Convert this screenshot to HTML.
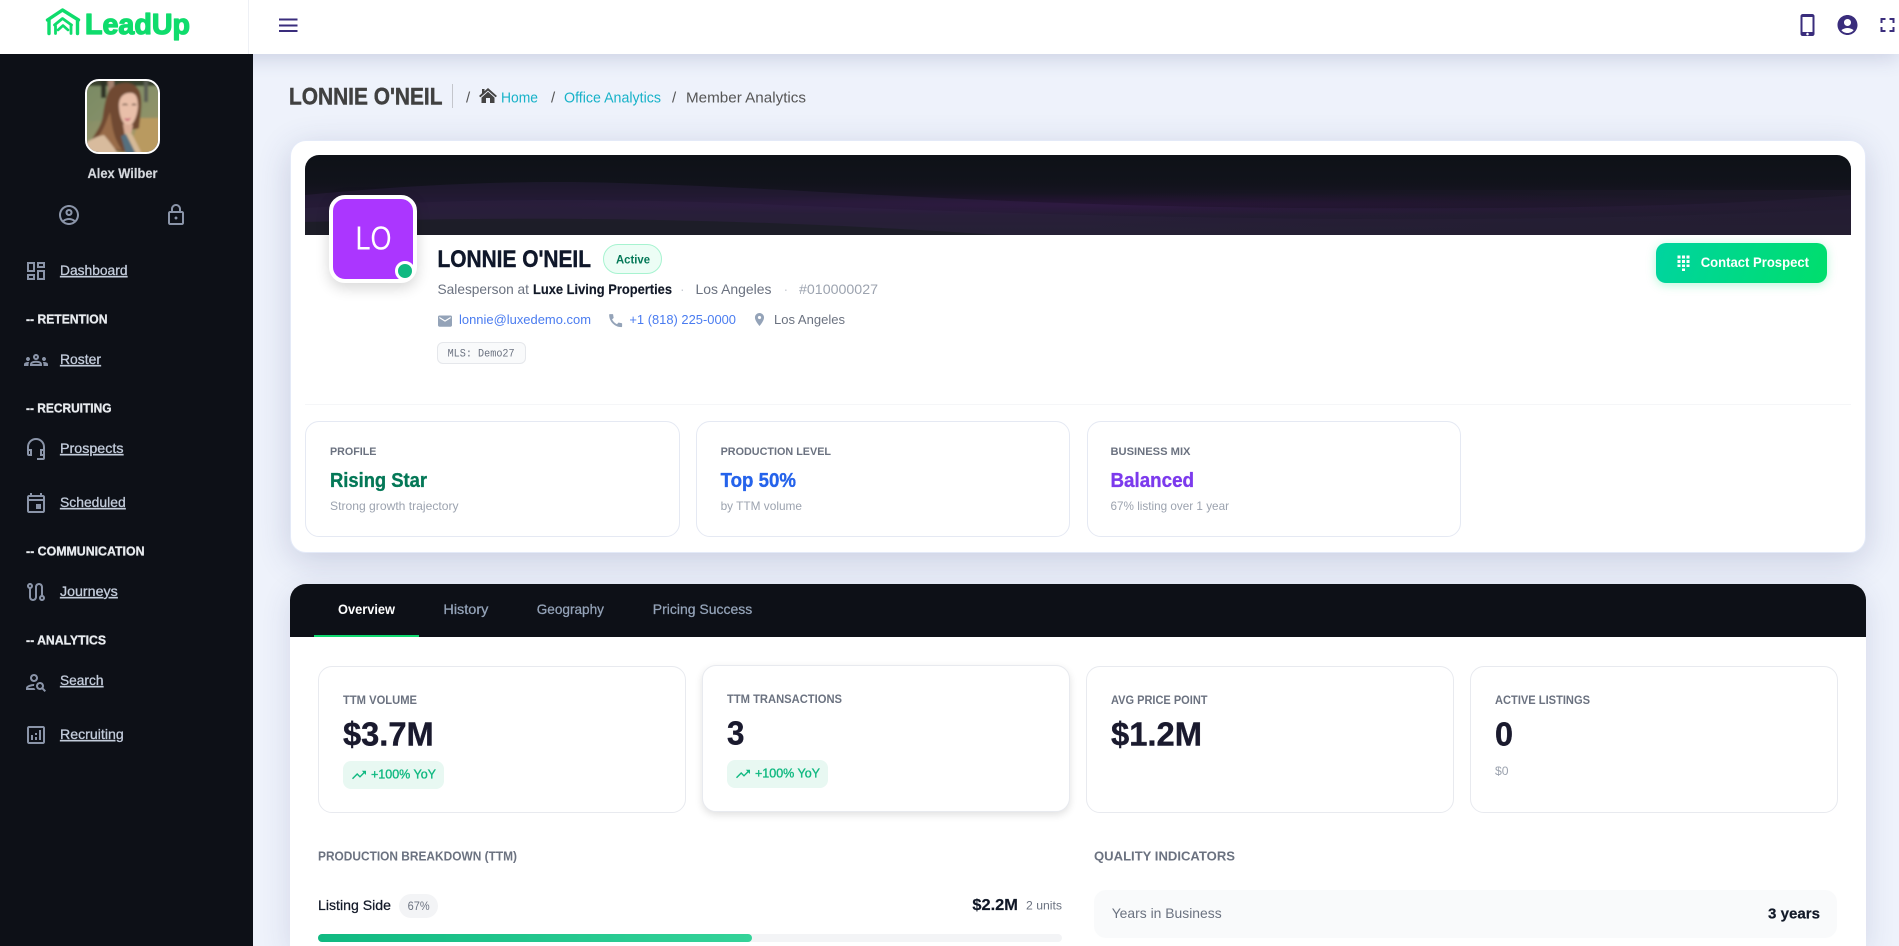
<!DOCTYPE html>
<html lang="en"><head><meta charset="utf-8"><title>Member Analytics</title>
<style>
html,body{margin:0;padding:0;width:1899px;height:946px;overflow:hidden;background:#eef2fb;font-family:"Liberation Sans",Arial,sans-serif}
.b{position:absolute;box-sizing:border-box}
svg.o{position:absolute;left:0;top:0;pointer-events:none}
text{font-family:"Liberation Sans",Arial,sans-serif}
.mc{background:#fff;border:1px solid #e5e9f3;border-radius:14px}
.kc{background:#fff;border:1px solid #e8eaef;border-radius:14px}
.tb{background:#e8f8f2;border-radius:8px}
#clip{position:absolute;left:0;top:0;width:1899px;height:946px;overflow:hidden}
</style></head><body><div id="clip">
<!-- header -->
<div class="b" style="left:0;top:0;width:1899px;height:54px;background:#fff;box-shadow:0 4px 20px rgba(60,70,130,.2);z-index:2"></div>
<div class="b" style="left:248px;top:0;width:1px;height:54px;background:#eef0f5;z-index:3"></div>
<!-- sidebar -->
<div class="b" style="left:0;top:54px;width:253px;height:892px;background:#0d1017;z-index:3"></div>
<!-- profile card -->
<div class="b" style="left:289.500px;top:140px;width:1576.500px;height:413px;background:#fff;border:1px solid #e4eaf8;border-radius:16px;box-shadow:0 8px 34px rgba(50,60,120,.2)"></div>
<svg class="o" width="1899" height="946" style="z-index:1">
<defs>
<clipPath id="bc"><path d="M319 155H1837a14 14 0 0 1 14 14V235H305V169a14 14 0 0 1 14-14z"/></clipPath>
<linearGradient id="bg1" x1="0" y1="0" x2="0" y2="1"><stop offset="0" stop-color="#0e1117"/><stop offset=".35" stop-color="#11131b"/><stop offset=".62" stop-color="#1b1528"/><stop offset="1" stop-color="#181a20"/></linearGradient>
<radialGradient id="bg2" cx=".58" cy=".62" r=".42" gradientTransform="matrix(1 0 0 .35 0 .4)"><stop offset="0" stop-color="#3c1450" stop-opacity=".38"/><stop offset="1" stop-color="#3c1450" stop-opacity="0"/></radialGradient>
<linearGradient id="bg3" x1="0" y1="0" x2="1" y2="0"><stop offset="0" stop-color="#171a20" stop-opacity="0"/><stop offset=".5" stop-color="#1c1a28" stop-opacity="0"/><stop offset="1" stop-color="#221c2e" stop-opacity=".6"/></linearGradient>
</defs>
<g clip-path="url(#bc)">
<rect x="305" y="155" width="1546" height="80" fill="url(#bg1)"/>
<rect x="305" y="155" width="1546" height="80" fill="url(#bg2)"/>
<path d="M305 195C420 184 520 180 620 183C800 188 1000 206 1300 208C1500 209 1700 208 1851 195V235H305z" fill="#6a3a98" fill-opacity=".13"/>
<path d="M305 208C460 198 600 198 760 204C960 212 1200 220 1450 219C1620 218 1750 214 1851 209V235H305z" fill="#4a3a68" fill-opacity=".1"/>
<path d="M305 222C600 214 800 222 1000 235H305z" fill="#161c1e" fill-opacity=".55"/>
<rect x="305" y="190" width="1546" height="45" fill="url(#bg3)"/>
</g>
</svg>
<!-- LO avatar -->
<div class="b" style="left:329px;top:195px;width:88px;height:88px;background:#ab36ff;border:4px solid #fff;border-radius:16px;box-shadow:0 5px 14px rgba(0,0,0,.16);z-index:1"></div>
<div class="b" style="left:395px;top:261px;width:20px;height:20px;background:#10b981;border:3px solid #fff;border-radius:50%;z-index:1"></div>
<!-- badges -->
<div class="b" style="left:603px;top:244px;width:59px;height:30px;background:#ecfdf5;border:1px solid #a7f3d0;border-radius:15px;z-index:1"></div>
<div class="b" style="left:437px;top:342px;width:89px;height:22px;background:#f9fafb;border:1px solid #e5e7eb;border-radius:6px;z-index:1"></div>
<div class="b" style="left:1656px;top:243px;width:171px;height:40px;background:linear-gradient(110deg,#00d4a0,#00de6c);border-radius:10px;box-shadow:0 2px 10px rgba(0,222,120,.28);z-index:1"></div>
<div class="b" style="left:305px;top:404px;width:1546px;height:1px;background:#f5f6f8;z-index:1"></div>
<div class="b mc" style="left:305px;top:421px;width:375px;height:116px;z-index:1"></div>
<div class="b mc" style="left:696px;top:421px;width:374px;height:116px;z-index:1"></div>
<div class="b mc" style="left:1087px;top:421px;width:374px;height:116px;z-index:1"></div>
<!-- tabs card -->
<div class="b" style="left:290px;top:584px;width:1576px;height:362px;background:#fff;border-radius:16px 16px 0 0;box-shadow:0 8px 30px rgba(50,60,120,.14);z-index:1"></div>
<div class="b" style="left:290px;top:584px;width:1576px;height:53px;background:#0d1017;border-radius:16px 16px 0 0;z-index:1"></div>
<div class="b" style="left:314px;top:635px;width:105px;height:2px;background:#0fd86f;z-index:1"></div>
<!-- kpi -->
<div class="b kc" style="left:318px;top:666px;width:368px;height:147px;z-index:1"></div>
<div class="b kc" style="left:702px;top:665px;width:368px;height:147px;box-shadow:0 3px 8px rgba(0,0,0,.12);z-index:1"></div>
<div class="b kc" style="left:1086px;top:666px;width:368px;height:147px;z-index:1"></div>
<div class="b kc" style="left:1470px;top:666px;width:368px;height:147px;z-index:1"></div>
<div class="b tb" style="left:343px;top:761px;width:101px;height:28px;z-index:1"></div>
<div class="b tb" style="left:727px;top:760px;width:101px;height:28px;z-index:1"></div>
<!-- breakdown -->
<div class="b" style="left:399px;top:894px;width:39px;height:24px;background:#f3f4f6;border-radius:12px;z-index:1"></div>
<div class="b" style="left:318px;top:934px;width:744px;height:8px;background:#f3f4f6;border-radius:4px;z-index:1"></div>
<div class="b" style="left:318px;top:934px;width:434px;height:8px;background:linear-gradient(90deg,#10b981,#34d399);border-radius:4px;z-index:1"></div>
<div class="b" style="left:1094px;top:890px;width:743px;height:48px;background:#f9fafb;border-radius:12px;z-index:1"></div>

<!-- overlay: text + icons -->
<svg class="o" width="1899" height="946" viewBox="0 0 1899 946" style="z-index:5">
<defs>
<clipPath id="ph"><rect x="87" y="81" width="71" height="71" rx="12"/></clipPath>
<linearGradient id="pb" x1="0" y1="0" x2="1" y2="1"><stop offset="0" stop-color="#75855f"/><stop offset=".5" stop-color="#93946a"/><stop offset="1" stop-color="#bd9c5e"/></linearGradient>
<filter id="bl" x="-10%" y="-10%" width="120%" height="120%"><feGaussianBlur stdDeviation="1.100"/></filter>
</defs>

<!-- logo -->
<g fill="none" stroke="#0fdc6c" stroke-linejoin="round" stroke-linecap="round">
<path d="M47.500 20L62.500 10L78.500 20" stroke-width="3.400"/>
<path d="M49 20V33.500M77.500 20V33.500" stroke-width="3.400"/>
<path d="M54.500 25L62.500 18.500L71.500 25" stroke-width="2.800"/>
<path d="M55.500 26V33.500M71 26V33.500" stroke-width="2.800"/>
<path d="M58 30L63 25.500L68 30" stroke-width="2.600"/>
</g>
<text x="85" y="33.800" font-size="29" font-weight="700" fill="#0fdc6c" stroke="#0fdc6c" stroke-width="1.300" stroke-linejoin="round" textLength="105" lengthAdjust="spacingAndGlyphs">LeadUp</text>

<!-- hamburger -->
<path d="M279 19.500h18.500M279 25.500h18.500M279 31h18.500" stroke="#3a2d7c" stroke-width="2" fill="none"/>
<!-- header icons -->
<g fill="#3a2d7c">
<path transform="translate(1795.500 13)" fill-rule="evenodd" d="M7.500 1h9c1.500 0 2.500 .9 2.500 2v18c0 1.100-.9 2-2 2H7c-1.100 0-2-.9-2-2V3c0-1.100 1-2 2.500-2zM7 4v15h10V4zM12 19.800a1.300 1.300 0 1 0 .01 0z"/>
<path transform="translate(1835.500 13)" d="M12 2C6.480 2 2 6.480 2 12s4.480 10 10 10 10-4.480 10-10S17.520 2 12 2zm0 4c1.930 0 3.500 1.570 3.500 3.500S13.930 13 12 13s-3.500-1.570-3.500-3.500S10.070 6 12 6zm0 14c-2.030 0-4.430-.82-6.140-2.880C7.550 15.800 9.680 15 12 15s4.450.8 6.140 2.120C16.430 19.180 14.030 20 12 20z"/>
<path transform="translate(1875.500 13)" d="M7 14H5v5h5v-2H7v-3zm-2-4h2V7h3V5H5v5zm12 7h-3v2h5v-5h-2v3zM14 5v2h3v3h2V5h-5z"/>
</g>

<!-- photo -->
<g clip-path="url(#ph)"><g filter="url(#bl)">
<rect x="85" y="79" width="75" height="75" fill="url(#pb)"/>
<rect x="85" y="79" width="75" height="42" fill="#7c8d68" fill-opacity=".5"/>
<rect x="85" y="79" width="75" height="7" fill="#39402f"/>
<path d="M140 118H160V154H128z" fill="#b99a60"/>
<rect x="101" y="80" width="5" height="18" fill="#2f3026"/>
<rect x="108" y="80" width="6" height="12" fill="#a58270"/>
<rect x="144" y="80" width="4" height="22" fill="#5c5f55"/>
<path d="M107 96C110 86 118 83 126 83C134 83 140 88 141 97C142 108 140 118 139 128C136 130 133 128 130 131C128 140 134 148 126 152C116 152 100 146 91 141C96 132 102 125 103 115C104 108 105 102 107 96z" fill="#6f4a32"/>
<path d="M97 138C104 130 106 122 110 112C112 122 112 136 122 150C112 150 104 144 97 138z" fill="#996c48"/>
<path d="M119 105C119 96 125 92 132 93C137 94 138 100 138 107C137 117 133 126 128 126C122 125 119 114 119 105z" fill="#e9bfa9"/>
<path d="M124 118q4 1.500 7-.5q-1.500 3.500-3.500 3.500q-2 0-3.500-3z" fill="#c9687a"/>
<path d="M122.500 105q2.500-1.500 5 0M132 105q2-1.200 4 0" stroke="#3e2a20" stroke-width="1.200" fill="none"/>
<path d="M123 124L133 125L131 134L125 136z" fill="#dcae97"/>
<path d="M85 154V143C92 139 98 136 104 135C109 141 114 147 118 154z" fill="#d8bb9d"/>
<path d="M121 136L128 133L138 154H126z" fill="#54707f"/>
<path d="M125 132L132 134L142 154H136z" fill="#d6b997"/>
</g></g>
<rect x="86" y="80" width="73" height="73" rx="13" fill="none" stroke="#fff" stroke-width="2"/>
<text x="87.500" y="177.800" font-size="14" font-weight="700" fill="#d4d7dc" stroke="#d4d7dc" stroke-width=".2" textLength="70" lengthAdjust="spacingAndGlyphs">Alex Wilber</text>

<!-- sidebar icons -->
<g fill="#8a94a8">
<path transform="translate(57 203)" d="M12 2C6.480 2 2 6.480 2 12s4.480 10 10 10 10-4.480 10-10S17.520 2 12 2zM7.350 18.500C8.660 17.560 10.260 17 12 17s3.340.56 4.650 1.500c-1.310.94-2.910 1.500-4.650 1.500s-3.340-.56-4.650-1.500zm10.790-1.380C16.450 15.800 14.320 15 12 15s-4.450.8-6.140 2.120C4.700 15.730 4 13.950 4 12c0-4.420 3.580-8 8-8s8 3.580 8 8c0 1.950-.7 3.730-1.860 5.120zM12 6c-1.930 0-3.500 1.570-3.500 3.500S10.070 13 12 13s3.500-1.570 3.500-3.500S13.930 6 12 6zm0 5c-.83 0-1.500-.67-1.500-1.500S11.170 8 12 8s1.500.67 1.500 1.500S12.830 11 12 11z"/>
<path transform="translate(164 203)" d="M18 8h-1V6c0-2.760-2.240-5-5-5S7 3.240 7 6v2H6c-1.100 0-2 .9-2 2v10c0 1.100.9 2 2 2h12c1.100 0 2-.9 2-2V10c0-1.100-.9-2-2-2zM9 6c0-1.660 1.340-3 3-3s3 1.340 3 3v2H9V6zm9 14H6V10h12v10zm-6-3.500c.83 0 1.500-.67 1.500-1.500s-.67-1.500-1.500-1.500-1.500.67-1.500 1.500.67 1.500 1.500 1.500z"/>
<path transform="translate(24 259)" d="M19 5v2h-4V5h4M9 5v6H5V5h4m10 8v6h-4v-6h4M9 17v2H5v-2h4M21 3h-8v6h8V3zM11 3H3v10h8V3zm10 8h-8v10h8V11zm-10 4H3v6h8v-6z"/>
<path transform="translate(24 348)" d="M4 13c1.100 0 2-.9 2-2s-.9-2-2-2-2 .9-2 2 .9 2 2 2zm1.130 1.100c-.37-.06-.74-.1-1.130-.1-.99 0-1.930.21-2.780.58C.48 14.900 0 15.620 0 16.430V18h4.500v-1.610c0-.83.23-1.610.63-2.290zM20 13c1.100 0 2-.9 2-2s-.9-2-2-2-2 .9-2 2 .9 2 2 2zm4 3.430c0-.81-.48-1.530-1.220-1.850-.85-.37-1.790-.58-2.780-.58-.39 0-.76.04-1.130.1.4.68.63 1.460.63 2.290V18H24v-1.570zm-7.760-2.780c-1.170-.52-2.610-.9-4.240-.9-1.630 0-3.070.39-4.240.9C6.680 14.130 6 15.210 6 16.390V18h12v-1.610c0-1.180-.68-2.260-1.760-2.740zM8.070 16c.09-.23.13-.39.91-.69.97-.38 1.990-.56 3.020-.56s2.050.18 3.020.56c.77.3.81.46.91.69H8.070zM12 8c.55 0 1 .45 1 1s-.45 1-1 1-1-.45-1-1 .45-1 1-1m0-2c-1.660 0-3 1.340-3 3s1.340 3 3 3 3-1.340 3-3-1.340-3-3-3z"/>
<path transform="translate(24 491)" d="M19 4h-1V2h-2v2H8V2H6v2H5c-1.100 0-2 .9-2 2v14c0 1.100.9 2 2 2h14c1.100 0 2-.9 2-2V6c0-1.100-.9-2-2-2zm0 16H5V10h14v10zm0-12H5V6h14v2zm-7 5h5v5h-5z"/>
<path transform="translate(24 580)" d="M19 15.180V7c0-2.210-1.790-4-4-4s-4 1.790-4 4v10c0 1.100-.9 2-2 2s-2-.9-2-2V8.820C8.160 8.400 9 7.300 9 6c0-1.660-1.340-3-3-3S3 4.340 3 6c0 1.300.84 2.400 2 2.820V17c0 2.210 1.790 4 4 4s4-1.790 4-4V7c0-1.100.9-2 2-2s2 .9 2 2v8.180c-1.160.41-2 1.510-2 2.820 0 1.660 1.340 3 3 3s3-1.340 3-3c0-1.300-.84-2.400-2-2.820zM6 7c-.55 0-1-.45-1-1s.45-1 1-1 1 .45 1 1-.45 1-1 1zm12 12c-.55 0-1-.45-1-1s.45-1 1-1 1 .45 1 1-.45 1-1 1z"/>
<path transform="translate(24 670)" d="M10 12c2.210 0 4-1.790 4-4s-1.790-4-4-4-4 1.790-4 4 1.790 4 4 4zm0-6c1.100 0 2 .9 2 2s-.9 2-2 2-2-.9-2-2 .9-2 2-2zM4 18c.22-.72 3.310-2 6-2 0-.7.13-1.370.35-1.990C7.620 13.910 2 15.270 2 18v2h9.540c-.52-.58-.93-1.250-1.190-2H4zM19.430 18.020c.36-.59.57-1.280.57-2.020 0-2.210-1.790-4-4-4s-4 1.790-4 4 1.790 4 4 4c.74 0 1.430-.22 2.020-.57L20.590 22 22 20.590c-1.500-1.500-.79-.8-2.570-2.570zM16 18c-1.100 0-2-.9-2-2s.9-2 2-2 2 .9 2 2-.9 2-2 2z"/>
<path transform="translate(24 723)" d="M19 3H5c-1.100 0-2 .9-2 2v14c0 1.100.9 2 2 2h14c1.100 0 2-.9 2-2V5c0-1.100-.9-2-2-2zm0 16H5V5h14v14zM7 12h2v5H7zM15 7h2v10h-2zM11 14h2v3h-2zM11 10h2v2h-2z"/>
</g>
<!-- headset -->
<g transform="translate(24 437)" fill="none" stroke="#8a94a8" stroke-width="2">
<path d="M4 17V10a8 8 0 0 1 16 0v7"/>
<path d="M4 13h3v5H5a1 1 0 0 1-1-1zM20 13h-3v5h2a1 1 0 0 0 1-1z"/>
<path d="M20 17v4a1 1 0 0 1-1 1h-6"/>
</g>

<!-- sidebar text -->
<g font-size="14" fill="#c3ccdb" stroke="#c3ccdb" stroke-width=".3" text-decoration="underline">
<text x="60" y="275" textLength="67.500" lengthAdjust="spacingAndGlyphs">Dashboard</text>
<text x="60" y="364" textLength="41" lengthAdjust="spacingAndGlyphs">Roster</text>
<text x="60" y="453" textLength="63.500" lengthAdjust="spacingAndGlyphs">Prospects</text>
<text x="60" y="507" textLength="65.700" lengthAdjust="spacingAndGlyphs">Scheduled</text>
<text x="60" y="596" textLength="57.700" lengthAdjust="spacingAndGlyphs">Journeys</text>
<text x="60" y="685" textLength="43.500" lengthAdjust="spacingAndGlyphs">Search</text>
<text x="60" y="739" textLength="63.700" lengthAdjust="spacingAndGlyphs">Recruiting</text>
</g>
<g font-size="12.500" font-weight="700" fill="#e8ebef" stroke="#e8ebef" stroke-width=".3">
<text x="26" y="323.500" textLength="81.500" lengthAdjust="spacingAndGlyphs">-- RETENTION</text>
<text x="26" y="412.500" textLength="85.500" lengthAdjust="spacingAndGlyphs">-- RECRUITING</text>
<text x="26" y="555.500" textLength="118.500" lengthAdjust="spacingAndGlyphs">-- COMMUNICATION</text>
<text x="26" y="644.500" textLength="80" lengthAdjust="spacingAndGlyphs">-- ANALYTICS</text>
</g>

<!-- page title -->
<text x="289" y="104.300" font-size="24" font-weight="700" fill="#404040" stroke="#404040" stroke-width=".45" textLength="153.500" lengthAdjust="spacingAndGlyphs">LONNIE O'NEIL</text>
<rect x="452" y="84" width="1" height="24" fill="#c4c6cc"/>
<path transform="translate(479 88)" fill="#444" d="M9 0L18 8L16.600 9.300L9 2.600L1.400 9.300L0 8L3 5.300V1H5.500V3.100zM9 3.800L15.500 9.600V15H11V10H7V15H2.500V9.600z"/>
<g font-size="15">
<text x="466" y="102.300" fill="#555">/</text>
<text x="501" y="102.300" fill="#17b2c8" textLength="37" lengthAdjust="spacingAndGlyphs">Home</text>
<text x="551" y="102.300" fill="#555">/</text>
<text x="564" y="102.300" fill="#17b2c8" textLength="97" lengthAdjust="spacingAndGlyphs">Office Analytics</text>
<text x="672" y="102.300" fill="#555">/</text>
<text x="686" y="102.300" fill="#555" textLength="120" lengthAdjust="spacingAndGlyphs">Member Analytics</text>
</g>

<!-- profile -->
<text x="355.500" y="249.500" font-size="33" fill="#fff" textLength="36" lengthAdjust="spacingAndGlyphs">LO</text>
<text x="437.500" y="267" font-size="24" font-weight="700" fill="#0f172a" stroke="#0f172a" stroke-width=".45" textLength="153.500" lengthAdjust="spacingAndGlyphs">LONNIE O'NEIL</text>
<text x="616" y="263.300" font-size="12" font-weight="700" fill="#047857" textLength="34" lengthAdjust="spacingAndGlyphs">Active</text>
<g font-size="14">
<text x="437.500" y="294" fill="#6b7280" textLength="91.500" lengthAdjust="spacingAndGlyphs">Salesperson at</text>
<text x="533" y="294" font-weight="700" fill="#111827" stroke="#111827" stroke-width=".15" textLength="139" lengthAdjust="spacingAndGlyphs">Luxe Living Properties</text>
<text x="680" y="294" fill="#c8ccd3">·</text>
<text x="695.500" y="294" fill="#6b7280" textLength="76" lengthAdjust="spacingAndGlyphs">Los Angeles</text>
<text x="783.500" y="294" fill="#c8ccd3">·</text>
<text x="799" y="294" fill="#9ca3af" textLength="79" lengthAdjust="spacingAndGlyphs">#010000027</text>
</g>
<path transform="translate(436.600 312.700) scale(.7)" fill="#94a3b8" d="M20 4H4c-1.100 0-2 .9-2 2v12c0 1.100.9 2 2 2h16c1.100 0 2-.9 2-2V6c0-1.100-.9-2-2-2zm0 4l-8 5-8-5V6l8 5 8-5v2z"/>
<path transform="translate(607 312) scale(.72)" fill="#94a3b8" d="M20.010 15.380c-1.230 0-2.420-.2-3.530-.56-.35-.12-.74-.03-1.010.24l-1.570 1.970c-2.830-1.350-5.480-3.900-6.890-6.830l1.950-1.660c.27-.28.35-.67.24-1.020-.37-1.110-.56-2.300-.56-3.530 0-.54-.45-.99-.99-.99H4.190C3.650 3 3 3.240 3 3.990 3 13.280 10.730 21 20.010 21c.71 0 .99-.63.99-1.180v-3.450c0-.54-.45-.99-.99-.99z"/>
<path transform="translate(751.700 311.700) scale(.65)" fill="#94a3b8" d="M12 2C8.130 2 5 5.130 5 9c0 5.250 7 13 7 13s7-7.750 7-13c0-3.870-3.130-7-7-7zm0 9.500c-1.380 0-2.500-1.120-2.500-2.500s1.120-2.500 2.500-2.500 2.500 1.120 2.500 2.500-1.120 2.500-2.500 2.500z"/>
<g font-size="13">
<text x="459" y="324" fill="#4a7cf0" textLength="132" lengthAdjust="spacingAndGlyphs">lonnie@luxedemo.com</text>
<text x="629.400" y="324" fill="#4a7cf0" textLength="106.600" lengthAdjust="spacingAndGlyphs">+1 (818) 225-0000</text>
<text x="774" y="324" fill="#6b7280" textLength="71" lengthAdjust="spacingAndGlyphs">Los Angeles</text>
</g>
<text x="447.600" y="356.500" font-size="11" fill="#6b7280" style="font-family:'Liberation Mono',monospace" textLength="67" lengthAdjust="spacingAndGlyphs">MLS: Demo27</text>

<!-- contact button -->
<g fill="#fff">
<rect x="1677.500" y="255.500" width="3" height="3"/><rect x="1682" y="255.500" width="3" height="3"/><rect x="1686.500" y="255.500" width="3" height="3"/>
<rect x="1677.500" y="260" width="3" height="3"/><rect x="1682" y="260" width="3" height="3"/><rect x="1686.500" y="260" width="3" height="3"/>
<rect x="1677.500" y="264.500" width="3" height="2.500"/><rect x="1682" y="264.500" width="3" height="2.500"/><rect x="1686.500" y="264.500" width="3" height="2.500"/>
<rect x="1682" y="268.500" width="3" height="2.500"/>
</g>
<text x="1700.700" y="267" font-size="14" font-weight="700" fill="#fff" textLength="108.300" lengthAdjust="spacingAndGlyphs">Contact Prospect</text>

<!-- mini cards -->
<g font-size="11" font-weight="700" fill="#6b7280">
<text x="330" y="455" textLength="46.400" lengthAdjust="spacingAndGlyphs">PROFILE</text>
<text x="720.600" y="455" textLength="110.400" lengthAdjust="spacingAndGlyphs">PRODUCTION LEVEL</text>
<text x="1110.500" y="455" textLength="80" lengthAdjust="spacingAndGlyphs">BUSINESS MIX</text>
</g>
<g font-size="20.500" font-weight="700" stroke-width=".35">
<text x="330" y="487" fill="#047857" stroke="#047857" textLength="97" lengthAdjust="spacingAndGlyphs">Rising Star</text>
<text x="720.600" y="487" fill="#2563eb" stroke="#2563eb" textLength="75.400" lengthAdjust="spacingAndGlyphs">Top 50%</text>
<text x="1110.500" y="487" fill="#7c3aed" stroke="#7c3aed" textLength="83.500" lengthAdjust="spacingAndGlyphs">Balanced</text>
</g>
<g font-size="12" fill="#9ca3af">
<text x="330" y="510" textLength="128.600" lengthAdjust="spacingAndGlyphs">Strong growth trajectory</text>
<text x="720.600" y="510" textLength="81.400" lengthAdjust="spacingAndGlyphs">by TTM volume</text>
<text x="1110.500" y="510" textLength="118.500" lengthAdjust="spacingAndGlyphs">67% listing over 1 year</text>
</g>

<!-- tabs -->
<g font-size="14">
<text x="338" y="614" font-weight="700" fill="#fff" textLength="57" lengthAdjust="spacingAndGlyphs">Overview</text>
<text x="443.400" y="614" fill="#94a3b8" stroke="#94a3b8" stroke-width=".25" textLength="45" lengthAdjust="spacingAndGlyphs">History</text>
<text x="536.700" y="614" fill="#94a3b8" stroke="#94a3b8" stroke-width=".25" textLength="67.300" lengthAdjust="spacingAndGlyphs">Geography</text>
<text x="652.800" y="614" fill="#94a3b8" stroke="#94a3b8" stroke-width=".25" textLength="99.500" lengthAdjust="spacingAndGlyphs">Pricing Success</text>
</g>

<!-- kpis -->
<g font-size="12" font-weight="700" fill="#6b7280">
<text x="343" y="704" textLength="74" lengthAdjust="spacingAndGlyphs">TTM VOLUME</text>
<text x="727" y="703" textLength="115" lengthAdjust="spacingAndGlyphs">TTM TRANSACTIONS</text>
<text x="1111" y="704" textLength="96.500" lengthAdjust="spacingAndGlyphs">AVG PRICE POINT</text>
<text x="1495" y="704" textLength="95" lengthAdjust="spacingAndGlyphs">ACTIVE LISTINGS</text>
</g>
<g font-size="33" font-weight="700" fill="#1a1a2e" stroke="#1a1a2e" stroke-width=".4">
<text x="343" y="745.500" textLength="90.700" lengthAdjust="spacingAndGlyphs">$3.7M</text>
<text x="727" y="744.500" textLength="17.400" lengthAdjust="spacingAndGlyphs">3</text>
<text x="1111" y="745.500" textLength="91" lengthAdjust="spacingAndGlyphs">$1.2M</text>
<text x="1495" y="745.500" textLength="18" lengthAdjust="spacingAndGlyphs">0</text>
</g>
<path transform="translate(350.600 766.600) scale(.7)" fill="#10b981" d="M16 6l2.290 2.290-4.880 4.880-4-4L2 16.590 3.410 18l6-6 4 4 6.300-6.290L22 12V6z"/>
<path transform="translate(734.600 765.600) scale(.7)" fill="#10b981" d="M16 6l2.290 2.290-4.880 4.880-4-4L2 16.590 3.410 18l6-6 4 4 6.300-6.290L22 12V6z"/>
<g font-size="13" fill="#10b981" stroke="#10b981" stroke-width=".35">
<text x="371" y="778.700" textLength="65" lengthAdjust="spacingAndGlyphs">+100% YoY</text>
<text x="755" y="777.700" textLength="65" lengthAdjust="spacingAndGlyphs">+100% YoY</text>
</g>
<text x="1495" y="775" font-size="12" fill="#9ca3af" textLength="13.600" lengthAdjust="spacingAndGlyphs">$0</text>

<!-- breakdown -->
<text x="318" y="860.300" font-size="12.500" font-weight="700" fill="#6b7280" textLength="199" lengthAdjust="spacingAndGlyphs">PRODUCTION BREAKDOWN (TTM)</text>
<text x="1094" y="860.300" font-size="13" font-weight="700" fill="#6b7280" textLength="141" lengthAdjust="spacingAndGlyphs">QUALITY INDICATORS</text>
<text x="318" y="910" font-size="14" fill="#111827" stroke="#111827" stroke-width=".25" textLength="73" lengthAdjust="spacingAndGlyphs">Listing Side</text>
<text x="407.600" y="910" font-size="11.500" fill="#6b7280" textLength="22" lengthAdjust="spacingAndGlyphs">67%</text>
<text x="972.400" y="910" font-size="15.500" font-weight="700" fill="#111827" stroke="#111827" stroke-width=".2" textLength="45.500" lengthAdjust="spacingAndGlyphs">$2.2M</text>
<text x="1026" y="909.700" font-size="12" fill="#6b7280" textLength="36" lengthAdjust="spacingAndGlyphs">2 units</text>
<text x="1111.700" y="918" font-size="14" fill="#6b7280" textLength="110" lengthAdjust="spacingAndGlyphs">Years in Business</text>
<text x="1768" y="918.300" font-size="15" font-weight="700" fill="#111827" stroke="#111827" stroke-width=".2" textLength="52" lengthAdjust="spacingAndGlyphs">3 years</text>
</svg>
</div></body></html>
